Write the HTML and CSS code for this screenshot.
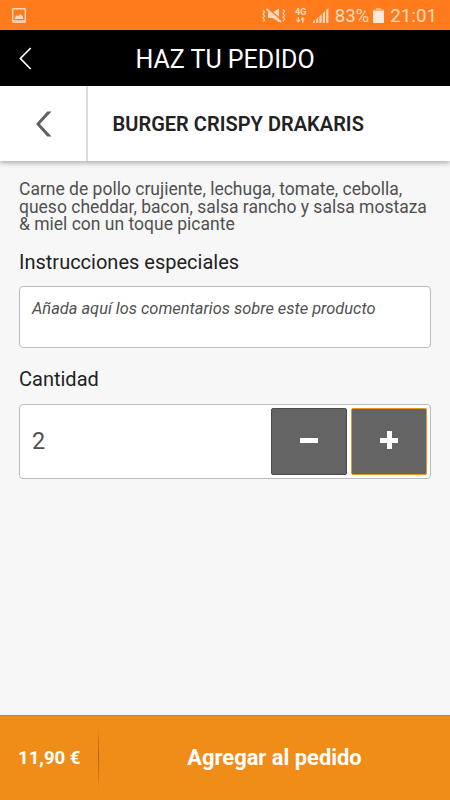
FILE: index.html
```html
<!DOCTYPE html>
<html lang="es">
<head>
    <meta charset="UTF-8">
    <meta name="viewport" content="width=device-width, initial-scale=1.0">
    <title>Haz tu pedido</title>
    <link rel="stylesheet" href="styles.css">
</head>
<body>
    <div class="status-bar">
        <svg class="icon-picture" width="14" height="15" viewBox="0 0 14 15">
            <rect x="0.7" y="0.7" width="12.6" height="13.6" rx="0.8" fill="none" stroke="currentColor" stroke-width="1.4"/>
            <path d="M3 11V9.2L5 7.2L6.2 8L8.5 6L11 8.6V11Z" fill="currentColor"/>
            <path d="M1 13H13" stroke="currentColor" stroke-width="1.4"/>
        </svg>
        <div class="status-right">
            <svg class="icon-mute" width="24" height="15" viewBox="0 0 24 15">
                <path d="M6 4.5H10.5L17 0.5V14L10.5 10H6Z" fill="currentColor"/>
                <path d="M5.5 0L20 12.5" stroke="#ff7b1c" stroke-width="1.5"/>
                <path d="M4.5 1L19 14" stroke="currentColor" stroke-width="1.7"/>
                <path d="M1 2L2.6 4L1 6L2.6 8L1 10L2.6 12L1.4 13.5M21 1.5L22.6 3.3L21 5.3L22.6 7.3L21 9.3L22.6 11.3L21 13" fill="none" stroke="currentColor" stroke-width="1.2"/>
            </svg>
            <div class="network">
                <span>4G</span>
                <svg width="9" height="6" viewBox="0 0 9 6">
                    <path d="M1.6 0H3V3H4.6L2.3 5.5L0 3H1.6ZM6 5.5H7.4V2.5H9L6.7 0L4.4 2.5H6Z" fill="currentColor"/>
                </svg>
            </div>
            <svg class="icon-signal" width="16" height="15" viewBox="0 0 16 15">
                <path d="M0 15V13.5L2 12V15ZM3.2 15V11L5.2 9.3V15ZM6.4 15V8.3L8.6 6.3V15ZM9.8 15V5.2L12 3.2V15ZM13.2 15V2L15.4 0V15Z" fill="currentColor"/>
            </svg>
            <span class="battery-level">83%</span>
            <svg class="icon-battery" width="11" height="15" viewBox="0 0 11 15">
                <path d="M3 0H8V1.6H11V3.5H0V1.6H3Z" fill="#ffb27d"/>
                <rect y="3" width="11" height="12" fill="#ffeada"/>
            </svg>
            <span class="clock">21:01</span>
        </div>
    </div>

    <header class="app-header">
        <svg class="icon-back" width="13" height="23" viewBox="0 0 13 23">
            <path d="M11.7 1L1.4 11.5L11.7 22" fill="none" stroke="currentColor" stroke-width="1.7"/>
        </svg>
        <h1>HAZ TU PEDIDO</h1>
    </header>

    <div class="product-header">
        <button type="button" class="product-back" aria-label="Volver">
            <svg width="17" height="26" viewBox="0 0 17 26">
                <path d="M12.3 0.5H16.5L5 13L16.5 25.5H12.3L1 13Z" fill="currentColor"/>
            </svg>
        </button>
        <h2>BURGER CRISPY DRAKARIS</h2>
    </div>

    <main class="content">
        <p class="description">Carne de pollo crujiente, lechuga, tomate, cebolla, queso cheddar, bacon, salsa rancho y salsa mostaza &amp; miel con un toque picante</p>

        <label class="field-title" for="comments">Instrucciones especiales</label>
        <textarea id="comments" class="comments" placeholder="Añada aquí los comentarios sobre este producto"></textarea>

        <h3 class="field-title">Cantidad</h3>
        <div class="quantity">
            <span class="quantity-value">2</span>
            <button type="button" class="quantity-button" aria-label="Menos">
                <svg width="20" height="20" viewBox="0 0 20 20">
                    <path d="M1 7H19V12H1Z" fill="currentColor"/>
                </svg>
            </button>
            <button type="button" class="quantity-button active" aria-label="Más">
                <svg width="20" height="20" viewBox="0 0 20 20">
                    <path d="M8 0H13V7H19V12H13V18H8V12H1V7H8Z" fill="currentColor"/>
                </svg>
            </button>
        </div>
    </main>

    <footer class="order-bar">
        <span class="price">11,90 €</span>
        <span class="divider"></span>
        <span class="add">Agregar al pedido</span>
    </footer>
</body>
</html>
```

FILE: styles.css
```css
* {
    box-sizing: border-box;
}

body {
    font-family: Roboto, "Liberation Sans", sans-serif;
    margin: 0;
    height: 100vh;
    display: flex;
    flex-direction: column;
    background: #f7f7f7;
    color: #222;
    overflow: hidden;
}

h1, h2, h3, p {
    margin: 0;
}

button {
    border: none;
    padding: 0;
    font: inherit;
}

svg {
    display: block;
    flex: none;
}

/* Android status bar */
.status-bar {
    height: 30px;
    padding: 0 13px 0 12px;
    display: flex;
    align-items: center;
    justify-content: space-between;
    background: #ff7b1c;
    color: #ffd9bd;
}

.status-right {
    display: flex;
    align-items: center;
}

.network {
    width: 12px;
    margin: 0 6px 0 9px;
    display: flex;
    flex-direction: column;
    align-items: center;
    gap: 1px;
    font-size: 9px;
    line-height: 8px;
    font-weight: 700;
}

.battery-level {
    margin: 1px 4px 0 6px;
    font-size: 18.6px;
}

.clock {
    margin: 1px 0 0 6px;
    font-size: 18.8px;
}

.app-header {
    height: 56px;
    display: grid;
    grid-template-columns: 50px 1fr 50px;
    align-items: center;
    background: #000;
    color: #fff;
}

.icon-back {
    margin: 0 0 0 19px;
}

.app-header h1 {
    padding-top: 2px;
    font-size: 25px;
    font-weight: 400;
    text-align: center;
}

.product-header {
    height: 75px;
    flex: none;
    display: flex;
    background: #fff;
    box-shadow: 0 2px 5px rgba(0, 0, 0, 0.3);
}

.product-back {
    width: 88px;
    display: flex;
    align-items: center;
    justify-content: center;
    background: #fff;
    border-right: 2px solid #dcdcdc;
    color: #606060;
}

.product-header h2 {
    padding-left: 24.5px;
    align-self: center;
    font-size: 20px;
    font-weight: 600;
    letter-spacing: 0.03px;
}

.content {
    flex: 1;
    padding: 20px 19px 0;
}

.description {
    font-size: 17.5px;
    line-height: 17.6px;
    color: #505050;
}

.field-title {
    display: block;
    margin-top: 16px;
    font-size: 20px;
    line-height: 24px;
    font-weight: 400;
    color: #222;
}

.comments {
    display: block;
    width: 100%;
    height: 62px;
    margin-top: 12px;
    padding: 12px;
    border: 1px solid #bbb;
    border-radius: 4px;
    background: #fff;
    font-family: inherit;
    font-size: 16.4px;
    font-style: italic;
    resize: none;
}

.comments::placeholder {
    color: #505050;
}

.comments + .field-title {
    margin-top: 19px;
}

.quantity {
    height: 75px;
    margin-top: 13px;
    padding: 3px;
    display: flex;
    gap: 4px;
    background: #fff;
    border: 1px solid #bbb;
    border-radius: 4px;
}

.quantity-value {
    flex: 1;
    padding-left: 9px;
    align-self: center;
    font-size: 23.5px;
    color: #505050;
}

.quantity-button {
    width: 76px;
    display: flex;
    align-items: center;
    justify-content: center;
    background: #646464;
    border: 1px solid #4c4c4c;
    border-radius: 2px;
    color: #fff;
}

.quantity-button.active {
    border: 1px solid #ec9420;
}

.order-bar {
    height: 85px;
    display: flex;
    align-items: center;
    padding-bottom: 1px;
    background: #f08c18;
    border-top: 1px solid #dd790b;
    color: #fff;
    font-weight: 700;
}

.price {
    width: 98px;
    padding-left: 18px;
    font-size: 18.6px;
}

.divider {
    width: 1px;
    height: 62px;
    background: linear-gradient(transparent, #aa610c, transparent);
}

.add {
    flex: 1;
    text-align: center;
    font-size: 21.9px;
}
```
